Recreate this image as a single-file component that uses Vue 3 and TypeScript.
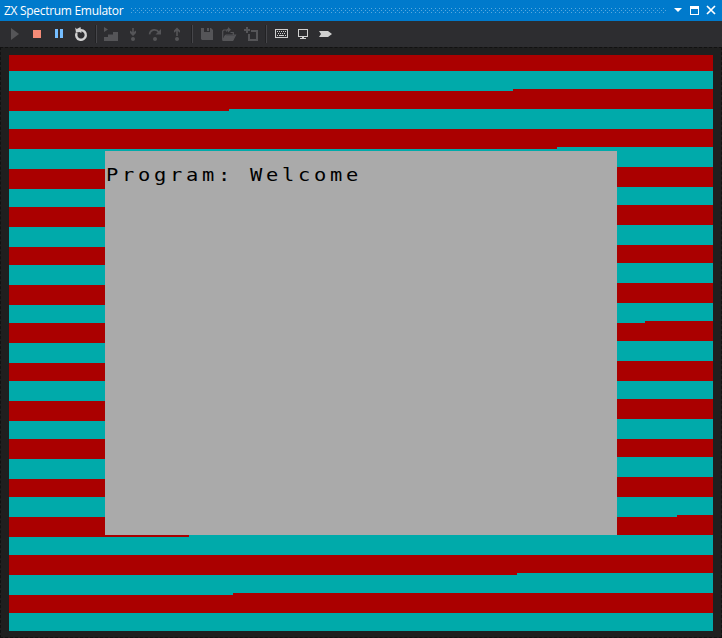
<script setup lang="ts">
type Edge = [left: number, right: number, step: number]

const WIDTH = 704
const HEIGHT = 576

// Border colour changes: y at the left side, y at the right side, x where it steps.
const edges: Edge[] = [
  [0, 0, 352], [16, 16, 352], [36, 34, 504], [56, 54, 220], [74, 74, 352],
  [94, 92, 548], [114, 112, 352], [134, 132, 352], [152, 150, 352],
  [172, 170, 352], [192, 190, 352], [210, 208, 352], [230, 228, 352],
  [250, 248, 352], [268, 266, 636], [288, 286, 352], [308, 306, 352],
  [326, 326, 352], [346, 344, 352], [366, 364, 352], [384, 384, 352],
  [404, 402, 352], [424, 422, 352], [442, 442, 352], [462, 460, 668],
  [482, 480, 180], [500, 500, 352], [520, 518, 508], [540, 538, 224],
  [558, 558, 352],
]

const stripes = edges.map(([l, r, s], i) => ({
  fill: i % 2 === 0 ? '#aa0000' : '#00aaaa',
  d: `M0 ${l}H${s}V${r}H${WIDTH}V${HEIGHT}H0z`,
}))

const keys = [4, 6, 8, 10, 12]
</script>

<template>
  <div class="window">
    <header class="title">
      <span class="caption">ZX Spectrum Emulator</span>
      <svg class="grip" width="535" height="5" shape-rendering="crispEdges">
        <defs>
          <pattern id="grip" width="4" height="4" patternUnits="userSpaceOnUse">
            <rect width="1" height="1" fill="#59a8de" />
            <rect x="2" y="2" width="1" height="1" fill="#59a8de" />
          </pattern>
        </defs>
        <rect width="535" height="5" fill="url(#grip)" />
      </svg>
      <svg class="controls" width="44" height="11" viewBox="0 0 44 11">
        <path d="M1 3h8L5 7z" fill="#fff" />
        <path d="M17 1h9v9H17zM18 4v5h7V4z" fill="#fff" fill-rule="evenodd" />
        <path d="M34 1l8 8M42 1l-8 8" stroke="#fff" stroke-width="1.7" />
      </svg>
    </header>

    <nav class="toolbar">
      <button class="off"><svg viewBox="0 0 16 16"><path d="M4 2v12l8-6z" /></svg></button>
      <button class="stop"><svg viewBox="0 0 16 16"><path d="M4 4h8v8H4z" /></svg></button>
      <button class="pause"><svg viewBox="0 0 16 16"><path d="M4 3h3v9H4zM9 3h3v9H9z" /></svg></button>
      <button>
        <svg viewBox="0 0 16 16">
          <path d="M7.5 4.2H8A4.8 4.8 0 1 1 3.7 6.9" fill="none" stroke="currentColor" stroke-width="2.4" />
          <path d="M2.2 1.5l1.6 1.4L7.5 1l1 6L6.3 6 3 6.8z" />
        </svg>
      </button>
      <i class="separator"></i>
      <button class="off"><svg viewBox="0 0 16 16"><path d="M1 1l4 2.5L1 6zM1 11h4V8.5h5V6h5v9H1z" /></svg></button>
      <button class="off">
        <svg viewBox="0 0 16 16">
          <path d="M7.2 2h1.6v4L11 4.6V7L8 10 5 7V4.6L7.2 6z" /><circle cx="8" cy="13" r="2" />
        </svg>
      </button>
      <button class="off">
        <svg viewBox="0 0 16 16">
          <path d="M2.5 8.3C3.5 3 9.5 2.4 12 6.5" fill="none" stroke="currentColor" stroke-width="1.7" />
          <path d="M14 3v5.5H8.5z" /><circle cx="8" cy="13" r="2" />
        </svg>
      </button>
      <button class="off">
        <svg viewBox="0 0 16 16">
          <path d="M7.2 10h1.6V5L11 6.8V4.6L8 1.6 5 4.6v2.2L7.2 5z" /><circle cx="8" cy="13" r="2" />
        </svg>
      </button>
      <i class="separator"></i>
      <button class="off">
        <svg viewBox="0 0 16 16"><path d="M2 2h3v4h6V2h1l2 2v10H3l-1-1zM8 2h2v3H8z" /></svg>
      </button>
      <button class="off">
        <svg viewBox="0 0 16 16">
          <path d="M1.7 14V5l1-1h2.3M9.5 6.5h2.8V9M2 14l3-5h9.5L12 14z" fill="none" stroke="currentColor" stroke-width="1.2" />
          <path d="M3.5 9.5H14L12 15H1.5z" />
          <path d="M5 5.2c0-2.2 1-2.4 2-2.4V1l3 2.7-3 2.7V4.5C6.4 4.5 6.2 5 6.2 6z" />
        </svg>
      </button>
      <button class="off">
        <svg viewBox="0 0 16 16"><path d="M3 1h2v2h2v2H5v2H3V5H1V3h2zM8 4h7v11H5V8h2v5h6V6H8z" /></svg>
      </button>
      <i class="separator"></i>
      <button>
        <svg viewBox="0 0 16 16" shape-rendering="crispEdges">
          <path d="M2 3h13v9H2zM3 4v7h11V4z" fill-rule="evenodd" />
          <template v-for="x in keys" :key="x">
            <rect :x="x" y="5" width="1" height="1" />
            <rect v-if="x < 12" :x="x + 1" y="7" width="1" height="1" />
          </template>
          <path d="M4 9h1v1H4zM6 9h5v1H6zM12 9h1v1h-1z" />
        </svg>
      </button>
      <button>
        <svg viewBox="0 0 16 16" shape-rendering="crispEdges">
          <path d="M3 3h10v8H9v1h2v1H5v-1h2v-1H3zM4 4v6h8V4z" fill-rule="evenodd" />
        </svg>
      </button>
      <button><svg viewBox="0 0 16 16"><path d="M2 5h9l4 3-4 3H2l2-3z" /></svg></button>
    </nav>

    <main class="content">
      <div class="display">
        <svg class="border" :viewBox="`0 0 ${WIDTH} ${HEIGHT}`" shape-rendering="crispEdges">
          <path v-for="(s, i) in stripes" :key="i" :d="s.d" :fill="s.fill" />
        </svg>
        <div class="paper"><span class="line">Program: Welcome</span></div>
      </div>
    </main>
  </div>
</template>

<style>
body {
  margin: 0;
  background: #1f1f1f;
}
</style>

<style scoped>
.window {
  width: 722px;
  height: 638px;
  display: flex;
  flex-direction: column;
  overflow: hidden;
  background: #1f1f1f;
}
.title {
  height: 21px;
  flex: none;
  display: flex;
  align-items: center;
  box-sizing: border-box;
  padding-left: 4px;
  background: #007acc;
  color: #fff;
}
.caption {
  width: 127px;
  font: 12px/21px "Open Sans", "Noto Sans", sans-serif;
  letter-spacing: -0.3px;
  white-space: nowrap;
}
.grip {
  flex: none;
}
.controls {
  margin-left: 7px;
}
.toolbar {
  height: 26px;
  flex: none;
  display: flex;
  align-items: center;
  padding-left: 4px;
  background: #2d2d30;
}
button {
  width: 22px;
  height: 22px;
  display: flex;
  align-items: center;
  justify-content: center;
  padding: 0;
  border: 0;
  background: none;
  color: #d0d0d0;
}
button svg {
  width: 16px;
  height: 16px;
  fill: currentColor;
}
.off {
  color: #555558;
}
.stop {
  color: #f48b77;
}
.pause {
  color: #75beff;
}
.separator {
  width: 1px;
  height: 18px;
  margin: 0 3px;
  border-left: 1px solid #222224;
  background: #46464a;
}
.content {
  flex: 1;
  box-sizing: border-box;
  padding: 7px 8px 6px;
  border: 1px dashed #111;
}
.display {
  width: 704px;
  height: 576px;
  display: grid;
}
.border,
.paper {
  grid-area: 1 / 1;
}
.border {
  width: 704px;
  height: 576px;
}
.paper {
  width: 512px;
  height: 384px;
  place-self: center;
  background: #aaa;
}
.line {
  display: block;
  width: 420px;
  padding: 14px 0 0 0.8px;
  font: 17px/20px "DejaVu Sans Mono", monospace;
  letter-spacing: 3.1px;
  white-space: pre;
  color: #000;
  transform: scaleX(1.2);
  transform-origin: 0 0;
}
</style>
